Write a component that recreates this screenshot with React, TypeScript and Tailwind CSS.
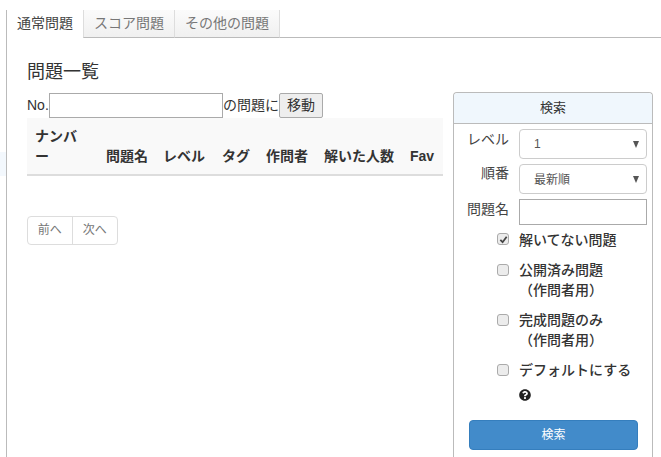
import React from "react";
import { FaQuestionCircle } from "react-icons/fa";

const font = { fontFamily: '"Liberation Sans", "Noto Sans CJK JP", sans-serif' };

function Check({ checked, children, className = "" }: { checked?: boolean; children: React.ReactNode; className?: string }) {
  return (
    <div className={`flex items-start ${className}`}>
      <span className={`w-[12px] h-[12px] ${checked ? "mt-[3px]" : "mt-[4px]"} ml-[43px] mr-[10px] shrink-0 rounded-[3px] border border-[#aaa] bg-[#ececec] flex items-center justify-center`}>
        {checked && (
          <svg width="9" height="9" viewBox="0 0 10 10">
            <path d="M1.5 5.5 L4 8 L8.5 2" fill="none" stroke="#444" strokeWidth="2" />
          </svg>
        )}
      </span>
      <div className="text-[14px] leading-[20px] font-medium text-[#333]">{children}</div>
    </div>
  );
}

function Sel({ value, nudge }: { value: string; nudge?: boolean }) {
  return (
    <div className="w-[128px] h-[30px] rounded-[4px] border border-[#ccc] bg-white flex items-center justify-between pl-[14px] pr-[7px] text-[12px] text-[#555]">
      <span className={nudge ? "pt-[2px]" : ""}>{value}</span>
      <span className="w-0 h-0 border-l-[3.5px] border-r-[3.5px] border-t-[7px] border-l-transparent border-r-transparent border-t-[#555]" />
    </div>
  );
}

export default function App() {
  return (
    <div className="w-[661px] h-[457px] overflow-hidden bg-white flex text-[#333]" style={font}>
      <div className="w-[6px] shrink-0 pt-[152px]">
        <div className="h-[24px] bg-[#f3f8fd]" />
      </div>
      <div className="w-[655px] shrink-0 mt-[10px] border-l border-[#bbb]">
        <div className="flex h-[28px] text-[14px]">
          <div className="w-[76px] h-[28px] bg-white text-center leading-[26px] text-[#444]">通常問題</div>
          <div className="w-[92px] h-[28px] border-l border-r border-b border-r-[#ddd] border-l-[#ddd] border-b-[#bbb] bg-gradient-to-b from-[#fbfbfb] to-[#f0f0f0] text-center leading-[26px] text-[#777]">スコア問題</div>
          <div className="w-[105px] h-[28px] border-r border-b border-r-[#ddd] border-b-[#bbb] bg-gradient-to-b from-[#fbfbfb] to-[#f0f0f0] text-center leading-[26px] text-[#777]">その他の問題</div>
          <div className="flex-1 border-b border-[#bbb]" />
        </div>
        <div className="flex pl-[20px] pt-[23px]">
          <div className="w-[416px] shrink-0">
            <h3 className="text-[18px] leading-[22px] text-[#333]">問題一覧</h3>
            <div className="flex items-center mt-[10px] h-[25px] text-[14px]">
              <span className="w-[22px]">No.</span>
              <div className="w-[174px] h-[25px] border border-[#aaa] bg-white" />
              <span className="w-[56px] text-center">の問題に</span>
              <div className="w-[44px] h-[25px] rounded-[2px] border border-[#aaa] bg-[#eee] text-center leading-[23px] text-[#333]">移動</div>
            </div>
            <div className="h-[58px] bg-[#f9f9f9] border-b-2 border-[#ddd] flex items-end pb-[8px] text-[14px] font-bold leading-[20px] text-[#333]">
              <div className="w-[79px] pl-[8px] pr-[24px]">ナンバー</div>
              <div className="w-[57px]">問題名</div>
              <div className="w-[59px]">レベル</div>
              <div className="w-[44px]">タグ</div>
              <div className="w-[58px]">作問者</div>
              <div className="w-[86px]">解いた人数</div>
              <div>Fav</div>
            </div>
            <div className="mt-[40px] flex w-[91px] h-[29px] rounded-[4px] border border-[#ddd] text-[12px] text-[#777] leading-[27px]">
              <div className="w-[45px] border-r border-[#ddd] text-center">前へ</div>
              <div className="w-[45px] text-center">次へ</div>
            </div>
          </div>
          <div className="w-[200px] ml-[10px] mt-[31px] shrink-0 rounded-t-[4px] border border-[#bbb] border-b-0 h-[400px]">
            <div className="h-[31px] bg-[#f0f7fd] rounded-t-[4px] border-b border-[#bbb] text-center text-[13px] leading-[30px] text-[#333]">検索</div>
            <div className="pt-[5px]">
              <div className="flex items-start mb-[5px]">
                <span className="w-[65px] pr-[10px] text-right text-[14px] leading-[20px] text-[#444]">レベル</span>
                <Sel value="1" />
              </div>
              <div className="flex items-start mb-[5px]">
                <span className="w-[65px] pr-[10px] text-right text-[14px] leading-[18px] text-[#444]">順番</span>
                <Sel value="最新順" nudge />
              </div>
              <div className="flex items-start mb-[5px]">
                <span className="w-[65px] pr-[10px] text-right text-[14px] leading-[20px] text-[#444]">問題名</span>
                <div className="w-[128px] h-[26px] border border-[#aaa] bg-white" />
              </div>
              <Check checked className="mb-[10px]">解いてない問題</Check>
              <Check className="mb-[10px]"><div>公開済み問題</div><div>（作問者用）</div></Check>
              <Check className="mb-[10px]"><div>完成問題のみ</div><div>（作問者用）</div></Check>
              <Check>デフォルトにする</Check>
              <div className="ml-[65px] mt-[9px] w-[12px] h-[12px] text-[#222]"><FaQuestionCircle size={12} /></div>
              <div className="ml-[15px] mt-[19px] w-[169px] h-[30px] rounded-[4px] bg-[#428bca] border border-[#357ebd] text-center text-white text-[12px] leading-[28px]">検索</div>
            </div>
          </div>
        </div>
      </div>
    </div>
  );
}
